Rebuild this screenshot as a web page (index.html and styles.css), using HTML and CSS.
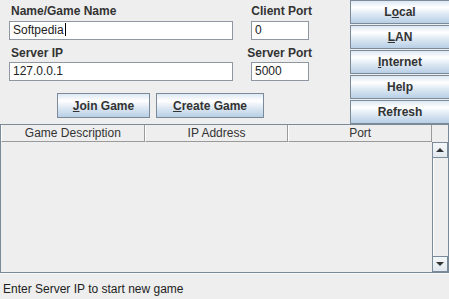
FILE: index.html
```html
<!DOCTYPE html>
<html lang="en">
<head>
    <meta charset="UTF-8">
    <title>Game Launcher</title>
    <link rel="stylesheet" href="styles.css">
</head>
<body>
    <div class="window">
        <div class="top">
            <div class="form">
                <div class="fields">
                    <label class="label">Name/Game Name</label>
                    <label class="label label-port">Client Port</label>
                    <div class="text-field field-name">Softpedia<span class="caret"></span></div>
                    <div class="text-field field-port">0</div>
                    <label class="label label-second">Server IP</label>
                    <label class="label label-port label-second">Server Port</label>
                    <div class="text-field field-name">127.0.0.1</div>
                    <div class="text-field field-port">5000</div>
                </div>
                <div class="actions">
                    <button class="btn btn-join"><u>J</u>oin Game</button>
                    <button class="btn btn-create"><u>C</u>reate Game</button>
                </div>
            </div>
            <div class="side">
                <button class="btn side-btn">L<u>o</u>cal</button>
                <button class="btn side-btn"><u>L</u>AN</button>
                <button class="btn side-btn"><u>I</u>nternet</button>
                <button class="btn side-btn">Help</button>
                <button class="btn side-btn">Refresh</button>
            </div>
        </div>

        <div class="table-pane">
            <div class="table-main">
                <div class="table-head">
                    <div class="th">Game Description</div>
                    <div class="th">IP Address</div>
                    <div class="th">Port</div>
                </div>
                <div class="table-body"></div>
            </div>
            <div class="scrollbar">
                <div class="corner"></div>
                <div class="arrow arrow-up"></div>
                <div class="track"></div>
                <div class="arrow arrow-down"></div>
            </div>
        </div>

        <div class="status">Enter Server IP to start new game</div>
    </div>
</body>
</html>
```

FILE: styles.css
```css
* {
    margin: 0;
    padding: 0;
    box-sizing: border-box;
}

body {
    font-family: 'Liberation Sans', Arial, sans-serif;
    font-size: 12px;
    background: #eeeeee;
    color: #333333;
}

.window {
    width: 449px;
    height: 299px;
    overflow: hidden;
    display: flex;
    flex-direction: column;
}

.top {
    display: flex;
    height: 124px;
}

.form {
    width: 350px;
    padding: 4px 0 0 9px;
}

.fields {
    display: grid;
    grid-template-columns: 224px 61px;
    column-gap: 18px;
}

.label {
    font-weight: bold;
    line-height: 14px;
    height: 14px;
    padding-left: 2px;
    margin-bottom: 3px;
    color: #333333;
    white-space: nowrap;
}

.label-port {
    justify-self: end;
    padding-left: 0;
}

.label-second {
    margin-top: 6px;
    margin-bottom: 2px;
}

.text-field {
    height: 19px;
    border: 1px solid #8f98a2;
    background: white;
    padding-left: 3px;
    line-height: 17px;
    color: #222222;
    white-space: nowrap;
}

.field-port {
    width: 58px;
}

.caret {
    display: inline-block;
    width: 1px;
    height: 13px;
    background: #000;
    vertical-align: -2px;
    margin-left: 1px;
}

.actions {
    display: flex;
    gap: 6px;
    margin-top: 12px;
    padding-left: 48px;
}

.btn {
    font-family: inherit;
    font-size: 12px;
    font-weight: bold;
    color: #333333;
    border: 1px solid #7a8a99;
    background: linear-gradient(to bottom, #dde8f3 0%, #ffffff 30%, #dde8f3 60%, #b8cfe5 100%);
    height: 25px;
    cursor: pointer;
}

.btn-join {
    width: 93px;
}

.btn-create {
    width: 108px;
}

.side {
    width: 99px;
    display: flex;
    flex-direction: column;
    gap: 1px;
}

.side-btn {
    height: 24px;
    border-right: none;
}

.table-pane {
    height: 149px;
    border: 1px solid #7a8a99;
    display: flex;
}

.table-main {
    flex: 1;
    display: flex;
    flex-direction: column;
}

.table-head {
    display: flex;
    height: 17px;
}

.th {
    flex: 1;
    text-align: center;
    font-weight: normal;
    line-height: 17px;
    border-right: 1px solid #9a9a9a;
    border-bottom: 1px solid #9a9a9a;
    border-left: 1px solid #ffffff;
}

.table-body {
    flex: 1;
}

.scrollbar {
    width: 16px;
    display: flex;
    flex-direction: column;
}

.corner {
    height: 17px;
}

.arrow {
    height: 16px;
    border: 1px solid #7a8a99;
    background: linear-gradient(to bottom, #f4f7fa, #e2e8ee);
    display: flex;
    align-items: center;
    justify-content: center;
}

.arrow::after {
    content: "";
    border-left: 4px solid transparent;
    border-right: 4px solid transparent;
}

.arrow-up::after {
    border-bottom: 4px solid #333333;
}

.arrow-down::after {
    border-top: 4px solid #333333;
}

.track {
    flex: 1;
    border-left: 1px solid #7a8a99;
    background: #eeeeee;
    box-shadow: inset 1px 0 0 #ffffff;
}

.status {
    flex: 1;
    border-top: 1px solid #f8f8f8;
    padding: 8px 0 0 3px;
    line-height: 14px;
    color: #222222;
}
```
